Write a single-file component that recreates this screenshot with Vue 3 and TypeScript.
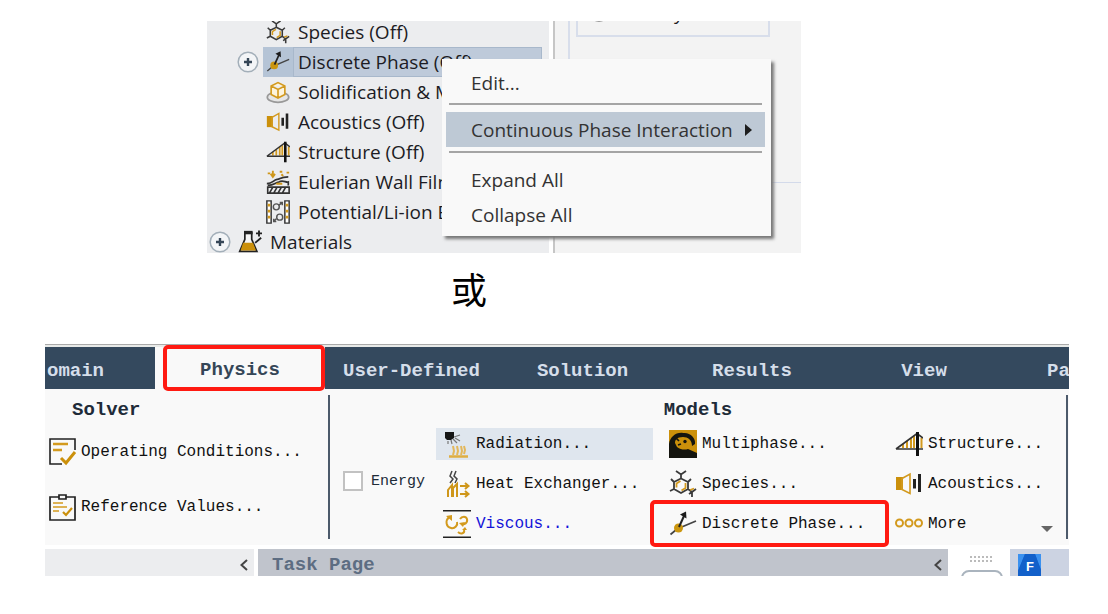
<script setup lang="ts">
interface TreeItem {
  icon: string
  label: string
  selected?: boolean
}
interface ModelItem {
  icon: string
  label: string
  state?: string
}

const treeItems: TreeItem[] = [
  { icon: 'species', label: 'Species (Off)' },
  { icon: 'discrete', label: 'Discrete Phase (Off)', selected: true },
  { icon: 'solid', label: 'Solidification & M' },
  { icon: 'acoustics', label: 'Acoustics (Off)' },
  { icon: 'structure', label: 'Structure (Off)' },
  { icon: 'film', label: 'Eulerian Wall Film' },
  { icon: 'battery', label: 'Potential/Li-ion B' },
]

const tabs: string[] = ['omain', 'Physics', 'User-Defined', 'Solution', 'Results', 'View', 'Pa']

const modelColumns: ModelItem[][] = [
  [
    { icon: 'radiation', label: 'Radiation...', state: 'hovered' },
    { icon: 'heat', label: 'Heat Exchanger...' },
    { icon: 'viscous', label: 'Viscous...', state: 'active' },
  ],
  [
    { icon: 'multiphase', label: 'Multiphase...' },
    { icon: 'species', label: 'Species...' },
    { icon: 'discrete', label: 'Discrete Phase...', state: 'marked' },
  ],
  [
    { icon: 'structure', label: 'Structure...' },
    { icon: 'acoustics', label: 'Acoustics...' },
    { icon: 'more', label: 'More', state: 'dropdown' },
  ],
]
</script>

<template>
  <svg class="symbols" aria-hidden="true">
    <symbol id="species" viewBox="0 0 28 28">
      <g fill="none" stroke="#3a3a3a" stroke-width="1.8">
        <path d="M12 8.500L19 12V19L12 23L5 19V12ZM12 8.500V4M7 1L12 4.500L17 1M5 12L2 9M5 19L1 21M19 12L22 9M19 19L23 22M23 22V27M20 24L23 22L27 19" />
        <path d="M7.500 17.500V13.500L11.500 11M12.500 20.500L16.500 18V13M21 20L25 18.500" stroke="#d39a1e" />
      </g>
    </symbol>
    <symbol id="discrete" viewBox="0 0 28 28">
      <path d="M1.500 24.500L8 19L27 11" fill="none" stroke="#444" stroke-width="1.700" />
      <circle cx="9.500" cy="18" r="4.500" fill="#cb960f" />
      <path d="M10 17L15 6" stroke="#222" stroke-width="2" />
      <path d="M11 4.500L17 1.500L17.500 8.500Z" fill="#1b1b1b" />
    </symbol>
    <symbol id="structure" viewBox="0 0 28 28">
      <path d="M8 18V14M12 18V11M16 18V8M19 18V6M26.500 18V8" stroke="#d39a1e" stroke-width="2" />
      <path d="M1 19H28M1 19L22 3.500L28 8" fill="none" stroke="#333" stroke-width="1.700" />
      <path d="M22.500 2V26" stroke="#111" stroke-width="3" />
    </symbol>
    <symbol id="acoustics" viewBox="0 0 28 28">
      <path d="M1 7H8V20H1Z" fill="#cb900b" />
      <path d="M7 8.500L15 4V23.500L7 19.500Z" fill="none" stroke="#d39a1e" stroke-width="1.600" />
      <path d="M19.500 9V18.500M24.500 4V22" stroke="#222" stroke-width="3" />
    </symbol>
    <symbol id="more" viewBox="0 0 28 28">
      <g fill="none" stroke="#d39a1e" stroke-width="2">
        <circle cx="4.500" cy="13" r="3.500" />
        <circle cx="14" cy="13" r="3.500" />
        <circle cx="23.500" cy="13" r="3.500" />
      </g>
    </symbol>
    <symbol id="multiphase" viewBox="0 0 28 28">
      <path d="M0 0H28V28H0Z" fill="#cb900b" />
      <path d="M0 28V14C1 7 7 2 14 3C21 2 27 8 26 14L23 16C23 10 19 7 14 7C8 7 6 10 6 13L8 17C12 20 16 20 19 19L28 23V28Z" fill="#15150f" />
      <path d="M6 12C8 11 7 15 9 16C12 18 18 18 19 14C20 9 15 7 13 9C11 11 15 12 14 14C12 15 12 12 10 12Z" fill="#cb900b" />
      <circle cx="16" cy="11.500" r="1.700" fill="#15150f" />
      <path d="M7 8L10 11M9 15L12 14" stroke="#15150f" stroke-width="1.700" />
    </symbol>
    <symbol id="radiation" viewBox="0 0 28 28">
      <path d="M2 2H11V8L8 10H4L2 8Z" fill="#151515" />
      <path d="M11 7L17 5M10 9L14 13M12 8L17 11M8 10L9 14M5 11V14" stroke="#777" stroke-width="1.200" />
      <path d="M6 26.500H25" stroke="#dfae42" stroke-width="2.500" />
      <path d="M10 25L11 21L10 16M14 25L15 21L14 16M18 25L19 21L18 16M21 24L22 20L21 16" fill="none" stroke="#e3b75a" stroke-width="2" />
    </symbol>
    <symbol id="heat" viewBox="0 0 28 28">
      <path d="M7 13L10 9L7 6L9 1M12 13L14 9L11 6L13 1" fill="none" stroke="#444" stroke-width="1.500" />
      <path d="M5 27V20L9 15V27M10 27V18L14 14V27" fill="none" stroke="#cf971b" stroke-width="2" />
      <path d="M17 16H25M22 13L25.500 16L22 19M17 24H25M22 21L25.500 24L22 27" fill="none" stroke="#cf971b" stroke-width="2" />
    </symbol>
    <symbol id="viscous" viewBox="0 0 28 28">
      <path d="M0 .800H28M0 27.200H28" stroke="#222" stroke-width="1.600" />
      <g fill="none" stroke="#d39a1e" stroke-width="2">
        <path d="M6 7C2 11 3 17 8 18C12 19 15 15 14 12M17 9C19 6 23 6 24 9C25 13 21 15 19 14M15 22C18 25 22 23 21 20" />
      </g>
      <path d="M3 6L9 5L9 11ZM16 13L22 12L20 17ZM19 20H24L22 17Z" fill="#d39a1e" />
    </symbol>
    <symbol id="solid" viewBox="0 0 28 28">
      <ellipse cx="14" cy="20" rx="12.500" ry="6" fill="#e6e6e6" stroke="#999" stroke-width="2" />
      <path d="M6 7L14 3L22 7V17L14 21L6 17ZM6 7L14 11L22 7M14 11V21" fill="#fdf4dd" stroke="#d39a1e" stroke-width="1.900" />
    </symbol>
    <symbol id="film" viewBox="0 0 28 28">
      <path d="M2 20H27V27H2ZM4 27L8 20M9 27L13 20M14 27L18 20M19 27L23 20" fill="none" stroke="#333" stroke-width="1.900" />
      <path d="M1 16C8 16 8 12 13 11C17 11 16 8 26 8M2 18C10 18 10 15 15 14C20 11 23 15 26 14V18" fill="none" stroke="#333" stroke-width="2" />
      <path d="M2 4H5M8 1V7M5.500 4.500L8 8L10.500 4.500M16 2H19M18 5L20 7M24 3H27M12 16H19" fill="none" stroke="#cf971b" stroke-width="2.200" />
    </symbol>
    <symbol id="battery" viewBox="0 0 28 28">
      <path d="M1 1H6V27H1ZM22 1H27V27H22Z" fill="#fff" stroke="#333" stroke-width="1.700" />
      <path d="M2 6H5M2 13H5M2 20H5M23 6H26M23 13H26M23 20H26" stroke="#d39a1e" stroke-width="3" />
      <g fill="none" stroke="#555" stroke-width="1.700">
        <circle cx="12" cy="8" r="3.500" />
        <circle cx="16" cy="20" r="3.500" />
        <path d="M15 6L19 3M16 3H19V6M12 22L9 25M9 22V25H12" />
      </g>
    </symbol>
    <symbol id="materials" viewBox="0 0 28 28">
      <path d="M8 3H16V11L22 25H2L8 11Z" fill="#f6f6f6" stroke="#222" stroke-width="2" />
      <path d="M6 15H17.500L21 24H3Z" fill="#cb900b" />
      <path d="M7 3H17" stroke="#222" stroke-width="4" />
      <path d="M20 15L27 9M21 4H28M24.500 .500V7.500" stroke="#222" stroke-width="2.200" />
    </symbol>
    <symbol id="conditions" viewBox="0 0 28 28">
      <path d="M26 12V1H1V26H13" fill="none" stroke="#222" stroke-width="1.600" />
      <path d="M4 6H19M4 12H13" stroke="#d39a1e" stroke-width="2.600" />
      <path d="M12 20L17 25L26 14" fill="none" stroke="#cb900b" stroke-width="3" />
    </symbol>
    <symbol id="values" viewBox="0 0 28 28">
      <path d="M10 4H1V27H26V4H17" fill="none" stroke="#222" stroke-width="1.700" />
      <path d="M10 2H17V6H10Z" fill="#f9f9f9" stroke="#222" stroke-width="1.700" />
      <path d="M4 10H14M4 14H18M4 18H10" stroke="#d39a1e" stroke-width="1.700" />
      <path d="M14 19L17 22L23 15" fill="none" stroke="#cb900b" stroke-width="2.200" />
    </symbol>
    <symbol id="plus" viewBox="0 0 22 22">
      <circle cx="11" cy="11" r="9.800" fill="#f3f5f7" stroke="#a3afb9" stroke-width="1.500" />
      <path d="M7 11H15M11 7V15" stroke="#354657" stroke-width="2.400" />
    </symbol>
  </svg>

  <main class="page">
    <section class="outline">
      <div class="tree">
        <ul class="tree-list">
          <li v-for="item in treeItems" :key="item.label" class="tree-row" :class="{ selected: item.selected }">
            <button v-if="item.selected" class="expander" type="button" aria-label="Expand Discrete Phase">
              <svg><use href="#plus" /></svg>
            </button>
            <div class="tree-item">
              <svg class="tree-icon"><use :href="'#' + item.icon" /></svg>
              <span class="tree-label">{{ item.label }}</span>
            </div>
          </li>
          <li class="tree-row root">
            <button class="expander" type="button" aria-label="Expand Materials">
              <svg><use href="#plus" /></svg>
            </button>
            <div class="tree-item">
              <svg class="tree-icon"><use href="#materials" /></svg>
              <span class="tree-label">Materials</span>
            </div>
          </li>
        </ul>
      </div>
      <div class="task">
        <div class="task-group">
          <div class="time-group">
            <label class="radio"><input type="radio" name="time" />Steady</label>
          </div>
        </div>
      </div>
      <div class="menu" role="menu">
        <button type="button" role="menuitem">Edit...</button>
        <hr />
        <button type="button" role="menuitem" class="current">
          Continuous Phase Interaction
          <svg viewBox="0 0 7 12"><path d="M0 0L7 6L0 12Z" fill="#1d1d1d" /></svg>
        </button>
        <hr />
        <button type="button" role="menuitem">Expand All</button>
        <button type="button" role="menuitem">Collapse All</button>
      </div>
    </section>

    <p class="or">或</p>

    <section class="app">
      <nav class="tabs">
        <button v-for="tab in tabs" :key="tab" type="button" class="tab" :class="tab.toLowerCase()">{{ tab }}</button>
      </nav>
      <div class="ribbon">
        <div class="solver">
          <h2>Solver</h2>
          <button type="button" class="command"><svg><use href="#conditions" /></svg>Operating Conditions...</button>
          <button type="button" class="command"><svg><use href="#values" /></svg>Reference Values...</button>
        </div>
        <div class="models">
          <h2>Models</h2>
          <div class="model-grid">
            <label class="energy"><input type="checkbox" />Energy</label>
            <div v-for="(column, index) in modelColumns" :key="index" class="model-column">
              <button v-for="item in column" :key="item.label" type="button" class="command" :class="item.state">
                <svg><use :href="'#' + item.icon" /></svg>{{ item.label }}
              </button>
            </div>
          </div>
        </div>
      </div>
      <div class="panes">
        <div class="pane side">
          <button type="button" aria-label="Collapse outline"><svg viewBox="0 0 8 12"><path d="M7 1L1.500 6L7 11" /></svg></button>
        </div>
        <div class="pane task-page">
          <h3>Task Page</h3>
          <button type="button" aria-label="Collapse task page"><svg viewBox="0 0 8 12"><path d="M7 1L1.500 6L7 11" /></svg></button>
        </div>
        <div class="tools">
          <svg class="grip" viewBox="0 0 24 6"><path d="M0 1H24M0 5H24" /></svg>
          <span class="tool"></span>
        </div>
        <div class="pane graphics">
          <svg class="logo" viewBox="0 0 23 23">
            <path d="M0 0H23V23H0Z" fill="#1769d8" />
            <path d="M0 0H7L0 17ZM17 0H23V16Z" fill="#3b91ef" />
            <path d="M7 0H17L23 16V23H0V17Z" fill="#1260ca" />
            <text x="8" y="17">F</text>
          </svg>
        </div>
      </div>
    </section>
  </main>
</template>

<style>
body {
  background: #fff;
}
</style>

<style scoped>
.symbols {
  position: absolute;
  width: 0;
  height: 0;
}
.page {
  padding-top: 21px;
  overflow: hidden;
  font-family: "Open Sans", "Noto Sans", sans-serif;
}
button {
  margin: 0;
  padding: 0;
  border: 0;
  background: none;
  color: inherit;
  font: inherit;
  text-align: left;
  white-space: nowrap;
}
svg {
  display: block;
  flex: none;
}

.outline {
  position: relative;
  display: flex;
  gap: 4px;
  height: 232px;
  margin: 0 307px 0 207px;
  font-size: 19px;
  color: #1c1c24;
}
.tree {
  flex: 0 0 342px;
  overflow: hidden;
  background: #ecedef;
}
.tree-list {
  margin: -4px 0 0;
  padding: 0;
  list-style: none;
}
.tree-row {
  display: flex;
  align-items: center;
  height: 30px;
  padding: 0 7px 0 56px;
}
.tree-row.selected {
  padding-left: 30px;
}
.tree-row.root {
  padding-left: 2px;
}
.expander {
  flex: none;
  width: 22px;
  margin-right: 4px;
}
.expander svg {
  width: 22px;
  height: 22px;
}
.tree-item {
  display: flex;
  flex: 1;
  align-items: center;
  min-width: 0;
  height: 30px;
  padding-left: 3px;
}
.selected .tree-item {
  background: #b5c4d6;
}
.tree-icon {
  width: 24px;
  height: 24px;
}
.tree-label {
  flex: 1;
  margin-left: 4px;
  padding-left: 4px;
  overflow: hidden;
  line-height: 28px;
  white-space: nowrap;
}
.selected .tree-label {
  margin-left: 3px;
  border: 1px solid #a8b8cb;
  background: #becada;
}
.task {
  flex: 1;
  min-width: 0;
  padding-left: 13px;
  border-left: 2px solid #c6c6c6;
  background: #f3f3f3;
}
.task-group {
  height: 161px;
  padding: 0 31px 0 6px;
  border-left: 2px solid #d8deeb;
  border-bottom: 1px solid #d3daea;
}
.time-group {
  display: flex;
  align-items: flex-end;
  height: 14px;
  padding-left: 12px;
  overflow: hidden;
  border: 2px solid #d8deeb;
  border-top: 0;
}
.radio {
  display: flex;
  align-items: center;
  gap: 16px;
  height: 26px;
  margin-bottom: 9px;
  font-size: 19px;
}
.radio input {
  appearance: none;
  width: 18px;
  height: 18px;
  margin: 0;
  border: 1px solid #999;
  border-radius: 50%;
}

.menu {
  position: absolute;
  top: 38px;
  left: 235px;
  display: flex;
  flex-direction: column;
  box-sizing: border-box;
  width: 329px;
  padding: 6px 6px 4px 4px;
  background: #f9f9f9;
  box-shadow: 3px 3px 3px #777;
}
.menu button {
  display: flex;
  align-items: center;
  height: 35px;
  padding: 0 13px 0 25px;
  color: #333;
}
.menu button.current {
  justify-content: space-between;
  background: #bec9d5;
}
.menu svg {
  width: 7px;
  height: 12px;
}
.menu hr {
  width: 313px;
  height: 2px;
  margin: 3px 3px 7px;
  border: 0;
  background: #a5a5a5;
}
.menu .current + hr {
  margin: 4px 3px 9px;
}

.or {
  margin: 14px 0 0 451px;
  font: 36px/42px "Noto Sans CJK SC", sans-serif;
  color: #000;
}

.app {
  margin: 35px 39px 0 45px;
  border-top: 1px solid #aaa;
  font-family: "Liberation Mono", monospace;
  font-size: 16px;
  color: #111;
}
.tabs {
  display: grid;
  grid-template-columns: 110fr 170fr 173fr 169fr 170fr 174fr 58fr;
  height: 42px;
  padding-top: 2px;
  background: linear-gradient(#e8eae8 2px, #34495e 2px);
}
.tab {
  position: relative;
  min-width: 0;
  padding-top: 5px;
  color: #d5deea;
  font-size: 19px;
  font-weight: bold;
  text-align: center;
}
.tab.omain,
.tab.pa {
  overflow: hidden;
  text-align: left;
}
.tab.omain {
  padding-left: 2px;
}
.tab.pa {
  padding-left: 36px;
}
.tab.physics {
  padding-top: 3px;
  background: #f9f9f9;
  color: #354657;
}
.tab.physics::after,
.command.marked::after {
  content: "";
  position: absolute;
  border: 4px solid #ff1a12;
  border-radius: 5px;
}
.tab.physics::after {
  inset: -2px 0 -2px 8px;
}
.ribbon {
  display: flex;
  height: 144px;
  padding: 6px 0;
  background: #f9f9f9;
}
.solver {
  flex: 0 0 283px;
  border-right: 2px solid #4c5a6b;
}
.models {
  flex: 1;
  margin-right: 1px;
  border-right: 2px solid #4c5a6b;
}
h2 {
  margin: 0;
  padding-top: 2px;
  color: #202b38;
  font-size: 19px;
  line-height: 27px;
  text-align: center;
}
.solver h2 {
  padding-bottom: 3px;
  padding-left: 27px;
  text-align: left;
}
.command {
  position: relative;
  display: flex;
  align-items: center;
  gap: 5px;
  height: 40px;
}
.command svg {
  width: 28px;
  height: 28px;
}
.solver .command {
  gap: 4px;
  height: 50px;
  padding-left: 4px;
}
.solver .command + .command {
  margin-top: 5px;
}
.model-grid {
  display: grid;
  grid-template-columns: 106fr 233fr 226fr 171fr;
  align-items: center;
}
.energy {
  display: flex;
  align-items: center;
  gap: 8px;
  padding: 0 0 6px 13px;
  color: #202b38;
  font-size: 15px;
}
.energy input {
  appearance: none;
  width: 20px;
  height: 20px;
  margin: 0;
  border: 2px solid #c2c2c2;
  background: #fff;
}
.model-column:nth-child(2) .command {
  width: 217px;
  box-sizing: border-box;
  padding-left: 7px;
}
.command.hovered {
  height: 32px;
  margin: 4px 0;
  background: #dfe6ee;
}
.command.active {
  color: #1414d8;
}
.command.marked::after {
  inset: -4px -24px -3px -19px;
}
.command.dropdown {
  width: 100%;
}
.command.dropdown::after {
  content: "";
  margin: 10px 13px 0 auto;
  border: 6px solid transparent;
  border-top-color: #666;
  border-bottom: 0;
}

.panes {
  display: flex;
  height: 27px;
  margin-top: 4px;
}
.pane {
  display: flex;
  align-items: center;
  justify-content: flex-end;
  box-sizing: border-box;
  overflow: hidden;
  padding: 5px 6px 0 14px;
}
.side {
  flex: 0 0 209px;
  margin-right: 4px;
  background: #ecedef;
}
.task-page {
  flex: 1;
  justify-content: space-between;
  background: #c0c4cc;
}
.pane button svg {
  width: 8px;
  height: 12px;
  fill: none;
  stroke: #444;
  stroke-width: 2;
}
h3 {
  margin: 0;
  color: #5d6d82;
  font-size: 19px;
  line-height: 22px;
}
.tools {
  display: flex;
  flex: 0 0 62px;
  flex-direction: column;
  align-items: center;
  gap: 8px;
  padding: 7px 0 0 5px;
  box-sizing: border-box;
  overflow: hidden;
}
.grip {
  width: 24px;
  height: 6px;
  stroke: #bbb;
  stroke-width: 2;
  stroke-dasharray: 2;
}
.tool {
  flex: none;
  width: 38px;
  height: 20px;
  border: 2px solid #aab4be;
  border-radius: 8px;
}
.graphics {
  flex: 0 0 59px;
  justify-content: flex-start;
  padding-left: 8px;
  background: #ccd3e2;
}
.logo {
  width: 23px;
  height: 23px;
}
.logo text {
  fill: #fff;
  font: bold 13px "Liberation Sans", sans-serif;
}
</style>
